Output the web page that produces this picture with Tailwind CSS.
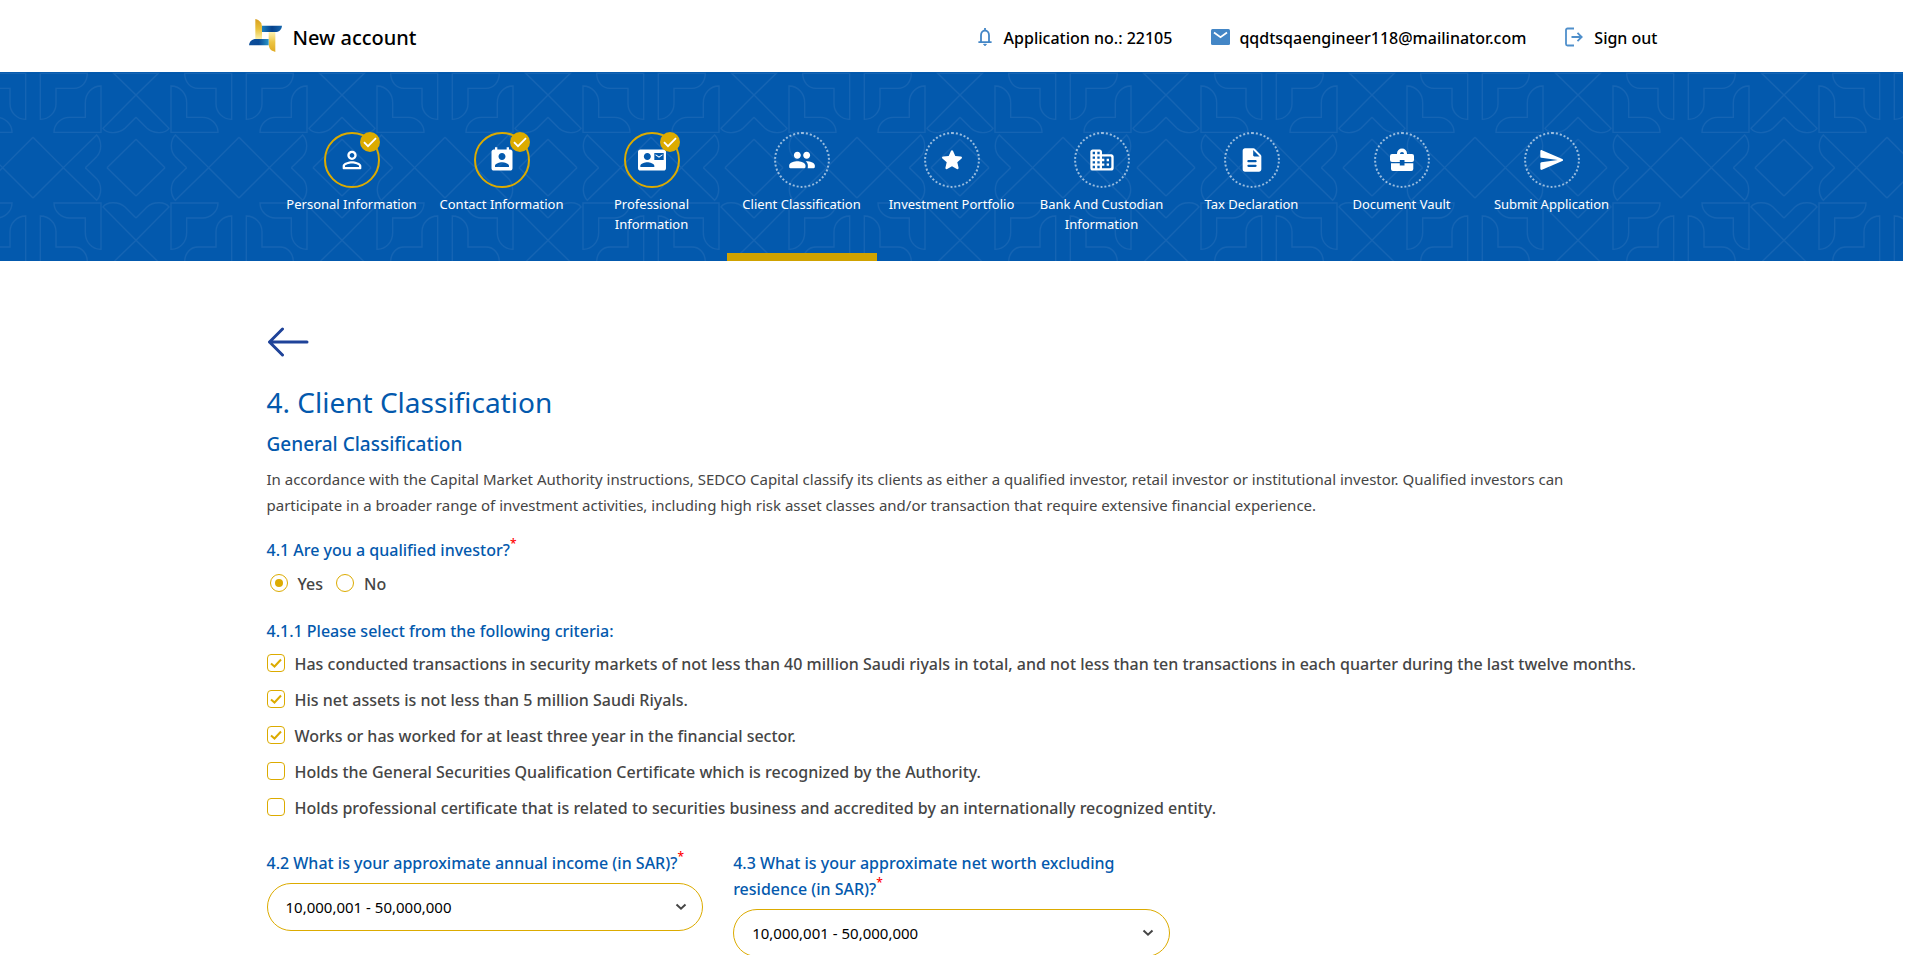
<!DOCTYPE html>
<html lang="en">
<head>
<meta charset="utf-8">
<meta name="viewport" content="width=device-width, initial-scale=1">
<title>New account - Client Classification</title>
<script src="https://cdn.jsdelivr.net/npm/@tailwindcss/browser@4"></script>
</head>
<body class="bg-white pr-[17px] font-['Noto_Sans','Open_Sans',sans-serif] text-base text-black">

<header class="mx-auto flex h-[72px] max-w-[1412px] items-center justify-between pt-[3px] pl-[3px]">
  <a href="#" class="flex items-center gap-[11px] text-xl font-medium">
    <svg class="-mt-1 h-[33px] w-[33px]" viewBox="0 0 99 99" aria-hidden="true">
      <defs>
        <linearGradient id="goldDown" x1="0" y1="0" x2="0" y2="1"><stop offset="0" stop-color="#d9a01f"/><stop offset=".5" stop-color="#e9c13a"/><stop offset="1" stop-color="#fbf0a8"/></linearGradient>
        <linearGradient id="goldUp" x1="0" y1="1" x2="0" y2="0"><stop offset="0" stop-color="#e0a920"/><stop offset=".5" stop-color="#ecc544"/><stop offset="1" stop-color="#fdf3b4"/></linearGradient>
        <linearGradient id="blueTop" x1="0" y1="0" x2="1" y2="0"><stop offset="0" stop-color="#1c7fbd"/><stop offset=".5" stop-color="#06418c"/><stop offset="1" stop-color="#1667ad"/></linearGradient>
        <linearGradient id="blueLow" x1="1" y1="0" x2="0" y2="0"><stop offset="0" stop-color="#2a96c8"/><stop offset=".5" stop-color="#0a4a96"/><stop offset="1" stop-color="#0d4f9b"/></linearGradient>
      </defs>
      <path d="M19 0C34 4 39 13 39 26V60H19Z" fill="url(#goldDown)"/>
      <path d="M79 99C64 95 59 88 59 73V39H79Z" fill="url(#goldUp)"/>
      <path d="M39 20H99C98 32 90 39 78 39H39Z" fill="url(#blueTop)"/>
      <path d="M59 79H0C1 67 9 60 21 60H59Z" fill="url(#blueLow)"/>
    </svg>
    New account
  </a>
  <nav class="flex items-center gap-[39px] font-medium">
    <a href="#" class="flex items-center gap-3">
      <svg class="-mt-0.5 h-[20px] w-[14px]" viewBox="0 0 14 20" fill="none" stroke="#4386c6" stroke-width="1.8" aria-hidden="true"><path d="M3 15V8.200A4 4.700 0 0 1 11 8.200V15M.4 15.200H13.600M7 1V3.500"/><path d="M5.600 17.300H8.400L7 18.800Z" fill="#4386c6" stroke-width="1"/></svg>
      Application no.: 22105
    </a>
    <a href="#" class="flex items-center gap-[9px]">
      <svg class="-mt-0.5 h-[16px] w-[19px]" viewBox="0 0 19 16" aria-hidden="true"><rect width="19" height="16" rx="1.500" fill="#4386c6"/><path d="M3 3.500L9.500 8.300L16 3.500" fill="none" stroke="#fff" stroke-width="1.700"/></svg>
      qqdtsqaengineer118@mailinator.com
    </a>
    <a href="#" class="flex items-center gap-[11px]">
      <svg class="-mt-0.5 h-[20px] w-[18px]" viewBox="0 0 18 20" fill="none" stroke="#4f8fcb" stroke-width="1.800" aria-hidden="true"><path d="M9 1.500H2.500A1.500 1.500 0 0 0 1 3V17A1.500 1.500 0 0 0 2.500 18.500H9M6.500 10H16.500M12.500 5.800L16.700 10L12.500 14.200"/></svg>
      Sign out
    </a>
  </nav>
</header>

<nav aria-label="Application steps" class="relative h-[189px] bg-[#0359ad]">
  <svg class="absolute inset-0 h-full w-full" aria-hidden="true">
    <defs>
      <g id="motifQuarter">
        <path d="M121 4H262C262 30 245 49 222 49H168V95C168 120 148 142 121 142Z"/>
        <path d="M303 42C275 42 256 65 256 92V136H208C185 136 162 155 162 181H303Z"/>
        <path d="M408 69L309 169C320 185 355 187 375 169L408 136M408 69L341 4H408"/>
        <path d="M408 202L321 287"/>
        <path d="M99 196L190 287L290 189C305 205 307 235 290 254L256 287"/>
      </g>
      <g id="motifHalf"><use href="#motifQuarter"/><use href="#motifQuarter" transform="matrix(1 0 0 -1 0 574)"/></g>
      <pattern id="motif" x="99" y="0" width="618" height="567" patternUnits="userSpaceOnUse" patternTransform="scale(.33333)">
        <g transform="translate(-99 0)" fill="none" stroke="#1564b3" stroke-width="4"><use href="#motifHalf"/><use href="#motifHalf" transform="matrix(-1 0 0 1 816 0)"/></g>
      </pattern>
      <symbol id="badge" viewBox="0 0 20 20"><circle cx="10" cy="10" r="10" fill="#dcab00"/><path d="M4 10.200L8 14.200L16 6.200" fill="none" stroke="#fff" stroke-width="1.800"/></symbol>
    </defs>
    <rect width="100%" height="100%" fill="url(#motif)"/>
  </svg>
  <ol class="relative mx-auto grid h-full max-w-[1350px] grid-cols-9 text-center text-[13px] leading-5 text-white">
    <li><a href="#" class="flex h-full flex-col items-center gap-1.5 px-2 pt-[60px]">
      <span class="relative grid size-14 place-items-center rounded-full border-2 border-[#dcab00]">
        <svg class="size-7" viewBox="0 0 24 24" fill="currentColor" aria-hidden="true"><path d="M12 6c1.100 0 2 .9 2 2s-.9 2-2 2-2-.9-2-2 .9-2 2-2m0 9c2.700 0 5.800 1.290 6 2v1H6v-.99c.2-.72 3.300-2.010 6-2.010m0-11C9.790 4 8 5.790 8 8s1.790 4 4 4 4-1.790 4-4-1.790-4-4-4zm0 9c-2.670 0-8 1.340-8 4v2c0 .55.45 1 1 1h14c.55 0 1-.45 1-1v-2c0-2.660-5.330-4-8-4z"/></svg>
        <svg class="absolute -top-0.5 -right-0.5 size-5" aria-hidden="true"><use href="#badge"/></svg>
      </span>
      Personal Information</a></li>
    <li><a href="#" class="flex h-full flex-col items-center gap-1.5 px-2 pt-[60px]">
      <span class="relative grid size-14 place-items-center rounded-full border-2 border-[#dcab00]">
        <svg class="size-7" viewBox="0 0 24 24" fill="currentColor" aria-hidden="true"><path d="M19 3h-1V1h-2v2H8V1H6v2H5c-1.110 0-2 .9-2 2v14c0 1.100.89 2 2 2h14c1.100 0 2-.9 2-2V5c0-1.100-.9-2-2-2zm-7 3c1.660 0 3 1.340 3 3s-1.340 3-3 3-3-1.340-3-3 1.340-3 3-3zm6 12H6v-1c0-2 4-3.100 6-3.100s6 1.100 6 3.100v1z"/></svg>
        <svg class="absolute -top-0.5 -right-0.5 size-5" aria-hidden="true"><use href="#badge"/></svg>
      </span>
      Contact Information</a></li>
    <li><a href="#" class="flex h-full flex-col items-center gap-1.5 px-6 pt-[60px]">
      <span class="relative grid size-14 place-items-center rounded-full border-2 border-[#dcab00]">
        <svg class="size-7" viewBox="0 0 24 24" fill="currentColor" aria-hidden="true"><path d="M21 8V7l-3 2-3-2v1l3 2 3-2zm1-5H2C.9 3 0 3.900 0 5v14c0 1.100.9 2 2 2h20c1.100 0 1.990-.9 1.990-2L24 5c0-1.100-.9-2-2-2zM8 6c1.660 0 3 1.340 3 3s-1.340 3-3 3-3-1.340-3-3 1.340-3 3-3zm6 12H2v-1c0-2 4-3.100 6-3.100s6 1.100 6 3.100v1zm8-6h-8V6h8v6z"/></svg>
        <svg class="absolute -top-0.5 -right-0.5 size-5" aria-hidden="true"><use href="#badge"/></svg>
      </span>
      Professional Information</a></li>
    <li><a href="#" aria-current="step" class="flex h-full flex-col items-center gap-1.5 border-b-8 border-[#d0a200] px-2 pt-[60px]">
      <span class="grid size-14 place-items-center rounded-full border-2 border-dotted border-white/60">
        <svg class="size-7" viewBox="0 0 24 24" fill="currentColor" aria-hidden="true"><path d="M16 11c1.660 0 2.990-1.340 2.990-3S17.660 5 16 5s-3 1.340-3 3 1.340 3 3 3zm-8 0c1.660 0 2.990-1.340 2.990-3S9.660 5 8 5 5 6.340 5 8s1.340 3 3 3zm0 2c-2.330 0-7 1.170-7 3.500V18c0 .55.45 1 1 1h12c.55 0 1-.45 1-1v-1.500c0-2.330-4.670-3.500-7-3.500zm8 0c-.29 0-.62.02-.97.05.02.01.03.03.04.04 1.140.83 1.930 1.940 1.930 3.410V18c0 .35-.07.69-.18 1H22c.55 0 1-.45 1-1v-1.500c0-2.330-4.670-3.500-7-3.500z"/></svg>
      </span>
      Client Classification</a></li>
    <li><a href="#" class="flex h-full flex-col items-center gap-1.5 px-2 pt-[60px]">
      <span class="grid size-14 place-items-center rounded-full border-2 border-dotted border-white/60">
        <svg class="size-7" viewBox="0 0 24 24" fill="currentColor" aria-hidden="true"><path d="M12 17.270l4.150 2.510c.76.46 1.690-.22 1.490-1.080l-1.100-4.720 3.670-3.180c.67-.58.31-1.680-.57-1.750l-4.830-.41-1.890-4.460c-.34-.81-1.500-.81-1.840 0L9.190 8.630l-4.830.41c-.88.07-1.240 1.170-.57 1.750l3.670 3.180-1.100 4.720c-.2.86.73 1.540 1.490 1.080L12 17.270z"/></svg>
      </span>
      Investment Portfolio</a></li>
    <li><a href="#" class="flex h-full flex-col items-center gap-1.5 px-2 pt-[60px]">
      <span class="grid size-14 place-items-center rounded-full border-2 border-dotted border-white/60">
        <svg class="size-7" viewBox="0 0 24 24" fill="currentColor" aria-hidden="true"><path d="M12 7V5c0-1.100-.9-2-2-2H4c-1.100 0-2 .9-2 2v14c0 1.100.9 2 2 2h16c1.100 0 2-.9 2-2V9c0-1.100-.9-2-2-2h-8zM6 19H4v-2h2v2zm0-4H4v-2h2v2zm0-4H4V9h2v2zm0-4H4V5h2v2zm4 12H8v-2h2v2zm0-4H8v-2h2v2zm0-4H8V9h2v2zm0-4H8V5h2v2zm9 12h-7v-2h2v-2h-2v-2h2v-2h-2V9h7c.55 0 1 .45 1 1v8c0 .55-.45 1-1 1zm-1-8h-2v2h2v-2zm0 4h-2v2h2v-2z"/></svg>
      </span>
      Bank And Custodian Information</a></li>
    <li><a href="#" class="flex h-full flex-col items-center gap-1.5 px-2 pt-[60px]">
      <span class="grid size-14 place-items-center rounded-full border-2 border-dotted border-white/60">
        <svg class="size-7" viewBox="0 0 24 24" fill="currentColor" aria-hidden="true"><path d="M14.590 2.590c-.38-.38-.89-.59-1.420-.59H6c-1.100 0-2 .9-2 2v16c0 1.100.89 2 1.990 2H18c1.100 0 2-.9 2-2V8.830c0-.53-.21-1.040-.59-1.410l-4.820-4.830zM15 18H9c-.55 0-1-.45-1-1s.45-1 1-1h6c.55 0 1 .45 1 1s-.45 1-1 1zm0-4H9c-.55 0-1-.45-1-1s.45-1 1-1h6c.55 0 1 .45 1 1s-.45 1-1 1zm-2-6V3.500L18.500 9H14c-.55 0-1-.45-1-1z"/></svg>
      </span>
      Tax Declaration</a></li>
    <li><a href="#" class="flex h-full flex-col items-center gap-1.5 px-2 pt-[60px]">
      <span class="grid size-14 place-items-center rounded-full border-2 border-dotted border-white/60">
        <svg class="size-7" viewBox="0 0 28 28" fill="currentColor" aria-hidden="true"><path fill-rule="evenodd" d="M9 8V7.500A5 5 0 0 1 19 7.500V8H24A2 2 0 0 1 26 10V14A2 2 0 0 1 24 16H16.500V14H11.800V16H4A2 2 0 0 1 2 14V10A2 2 0 0 1 4 8ZM12 8H16A2 2 0 0 0 12 8ZM3 17.300H11.800V19.500H16.500V17.300H25.300V23A2 2 0 0 1 23.300 25H5A2 2 0 0 1 3 23Z"/></svg>
      </span>
      Document Vault</a></li>
    <li><a href="#" class="flex h-full flex-col items-center gap-1.5 px-2 pt-[60px]">
      <span class="grid size-14 place-items-center rounded-full border-2 border-dotted border-white/60">
        <svg class="size-7" viewBox="0 0 24 24" fill="currentColor" aria-hidden="true"><path d="M3.400 20.400l17.450-7.480c.81-.35.81-1.490 0-1.840L3.400 3.600c-.66-.29-1.390.2-1.390.91L2 9.120c0 .5.37.93.87.99L17 12 2.870 13.880c-.5.07-.87.5-.87 1l.01 4.610c0 .71.73 1.200 1.390.91z"/></svg>
      </span>
      Submit Application</a></li>
  </ol>
</nav>

<main class="mx-auto max-w-[1370px] pt-[66px] text-[#454545]">
  <button type="button" aria-label="Back" class="block cursor-pointer">
    <svg class="h-[30px] w-[42px]" viewBox="0 0 42 30" fill="none" stroke="#1f4399" stroke-width="3" stroke-linecap="round" stroke-linejoin="round" aria-hidden="true"><path d="M40 15H2.500M15.500 2L2.500 15L15.500 28"/></svg>
  </button>
  <h1 class="mt-[27px] text-[28px] leading-9 text-[#0359ad]">4. Client Classification</h1>
  <h2 class="mt-2.5 text-[19px] leading-7 font-medium text-[#0359ad]">General Classification</h2>
  <p class="mt-2 max-w-[1330px] text-[15px] leading-[26px]">In accordance with the Capital Market Authority instructions, SEDCO Capital classify its clients as either a qualified investor, retail investor or institutional investor. Qualified investors can participate in a broader range of investment activities, including high risk asset classes and/or transaction that require extensive financial experience.</p>

  <form>
    <fieldset class="mt-[19px] font-medium">
      <legend class="leading-[26px] text-[#0359ad]">4.1 Are you a qualified investor?<sup class="-top-2 text-[12px] text-[#ff0000]">*</sup></legend>
      <div class="mt-[11px] flex gap-[13px] pl-[3px] leading-5">
        <label class="flex gap-2.5"><input type="radio" name="qualified" checked class="grid size-[18px] appearance-none place-content-center rounded-full border border-[#dcab00] before:size-2 before:rounded-full checked:before:bg-[#dcab00]">Yes</label>
        <label class="flex gap-2.5"><input type="radio" name="qualified" class="grid size-[18px] appearance-none place-content-center rounded-full border border-[#dcab00] before:size-2 before:rounded-full checked:before:bg-[#dcab00]">No</label>
      </div>
    </fieldset>

    <fieldset class="mt-6 font-medium">
      <legend class="leading-[26px] text-[#0359ad]">4.1.1 Please select from the following criteria:</legend>
      <div class="mt-2.5 grid gap-4 leading-5">
        <label class="flex gap-2.5"><span class="grid size-[18px] shrink-0"><input type="checkbox" checked class="peer col-start-1 row-start-1 size-[18px] appearance-none rounded-[4px] border border-[#dcab00]"><svg class="pointer-events-none invisible col-start-1 row-start-1 size-[18px] peer-checked:visible" viewBox="0 0 18 18" fill="none" stroke="#dcab00" stroke-width="2" aria-hidden="true"><path d="M4 9.500L7.500 12.500L14 5.500"/></svg></span>Has conducted transactions in security markets of not less than 40 million Saudi riyals in total, and not less than ten transactions in each quarter during the last twelve months.</label>
        <label class="flex gap-2.5"><span class="grid size-[18px] shrink-0"><input type="checkbox" checked class="peer col-start-1 row-start-1 size-[18px] appearance-none rounded-[4px] border border-[#dcab00]"><svg class="pointer-events-none invisible col-start-1 row-start-1 size-[18px] peer-checked:visible" viewBox="0 0 18 18" fill="none" stroke="#dcab00" stroke-width="2" aria-hidden="true"><path d="M4 9.500L7.500 12.500L14 5.500"/></svg></span>His net assets is not less than 5 million Saudi Riyals.</label>
        <label class="flex gap-2.5"><span class="grid size-[18px] shrink-0"><input type="checkbox" checked class="peer col-start-1 row-start-1 size-[18px] appearance-none rounded-[4px] border border-[#dcab00]"><svg class="pointer-events-none invisible col-start-1 row-start-1 size-[18px] peer-checked:visible" viewBox="0 0 18 18" fill="none" stroke="#dcab00" stroke-width="2" aria-hidden="true"><path d="M4 9.500L7.500 12.500L14 5.500"/></svg></span>Works or has worked for at least three year in the financial sector.</label>
        <label class="flex gap-2.5"><span class="grid size-[18px] shrink-0"><input type="checkbox" class="peer col-start-1 row-start-1 size-[18px] appearance-none rounded-[4px] border border-[#dcab00]"><svg class="pointer-events-none invisible col-start-1 row-start-1 size-[18px] peer-checked:visible" viewBox="0 0 18 18" fill="none" stroke="#dcab00" stroke-width="2" aria-hidden="true"><path d="M4 9.500L7.500 12.500L14 5.500"/></svg></span>Holds the General Securities Qualification Certificate which is recognized by the Authority.</label>
        <label class="flex gap-2.5"><span class="grid size-[18px] shrink-0"><input type="checkbox" class="peer col-start-1 row-start-1 size-[18px] appearance-none rounded-[4px] border border-[#dcab00]"><svg class="pointer-events-none invisible col-start-1 row-start-1 size-[18px] peer-checked:visible" viewBox="0 0 18 18" fill="none" stroke="#dcab00" stroke-width="2" aria-hidden="true"><path d="M4 9.500L7.500 12.500L14 5.500"/></svg></span>Holds professional certificate that is related to securities business and accredited by an internationally recognized entity.</label>
      </div>
    </fieldset>

    <div class="mt-8 grid grid-cols-3 items-start gap-[30px]">
      <div class="flex flex-col gap-[7px]">
        <label for="income" class="leading-[26px] font-medium text-[#0359ad]">4.2 What is your approximate annual income (in SAR)?<sup class="-top-2 text-[12px] text-[#ff0000]">*</sup></label>
        <div class="grid items-center">
          <select id="income" class="col-start-1 row-start-1 h-12 w-full appearance-none rounded-full border border-[#dcab00] bg-white px-[18px] text-[15px] text-black"><option>10,000,001 - 50,000,000</option></select>
          <svg class="pointer-events-none z-10 col-start-1 row-start-1 mr-4 h-2 w-3 justify-self-end" viewBox="0 0 12 8" fill="none" stroke="#454545" stroke-width="2" aria-hidden="true"><path d="M1.500 1.500L6 5.700L10.500 1.500"/></svg>
        </div>
      </div>
      <div class="flex flex-col gap-[7px]">
        <label for="worth" class="leading-[26px] font-medium text-[#0359ad]">4.3 What is your approximate net worth excluding residence (in SAR)?<sup class="-top-2 text-[12px] text-[#ff0000]">*</sup></label>
        <div class="grid items-center">
          <select id="worth" class="col-start-1 row-start-1 h-12 w-full appearance-none rounded-full border border-[#dcab00] bg-white px-[18px] text-[15px] text-black"><option>10,000,001 - 50,000,000</option></select>
          <svg class="pointer-events-none z-10 col-start-1 row-start-1 mr-4 h-2 w-3 justify-self-end" viewBox="0 0 12 8" fill="none" stroke="#454545" stroke-width="2" aria-hidden="true"><path d="M1.500 1.500L6 5.700L10.500 1.500"/></svg>
        </div>
      </div>
    </div>
  </form>
</main>
</body>
</html>
